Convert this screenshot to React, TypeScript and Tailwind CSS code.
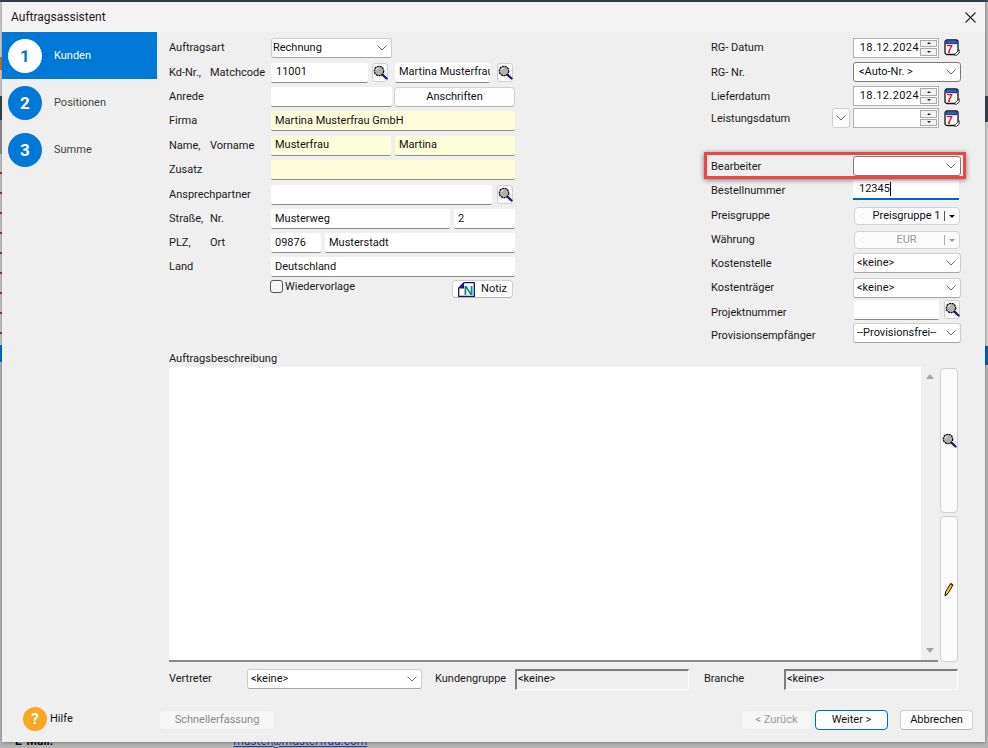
import React from "react";

const Chevron = ({ c = "#6b6b6b" }: { c?: string }) => (
  <svg width="10" height="6" viewBox="0 0 10 6" className="shrink-0">
    <path d="M0.5 0.5 L5 5 L9.5 0.5" fill="none" stroke={c} strokeWidth="1" />
  </svg>
);

const Lens = ({ size = 15 }: { size?: number }) => (
  <svg width={size} height={size} viewBox="0 0 14 14" className="shrink-0">
    <path d="M8.6 8.8 L12.6 12.6" stroke="#1a1a80" strokeWidth="2.2" strokeLinecap="round" />
    <circle cx="5.6" cy="5.6" r="4.4" fill="#b0b0b0" stroke="#111" strokeWidth="1.2" strokeDasharray="2 0.6" />
    <path d="M3.2 4.6 A3 3 0 0 1 5.2 2.8" fill="none" stroke="#e8e8e8" strokeWidth="1" />
  </svg>
);

const CalIcon = () => (
  <svg width="16" height="17" viewBox="0 0 16 17" className="shrink-0">
    <rect x="1" y="1" width="13" height="14.5" rx="2" fill="#fff" stroke="#111" strokeWidth="1.3" />
    <rect x="1.6" y="1.6" width="11.8" height="3.6" fill="#1d34c8" />
    <rect x="3" y="2.6" width="9" height="1" fill="#2fa56b" />
    <text x="2.6" y="14.4" fontSize="11.5" fontWeight="900" fontFamily="Liberation Sans, sans-serif" fill="#e01010">7</text>
    <path d="M10 15.8 L15.2 10.8 L15.2 14 L12.6 16.2 Z" fill="#fff" stroke="#111" strokeWidth="0.8" />
  </svg>
);

const NoteIcon = () => (
  <svg width="17" height="15" viewBox="0 0 17 15" className="shrink-0">
    <path d="M0.7 14.3 L0.7 6 L6 0.7 L16.3 0.7 L16.3 14.3 Z" fill="#fff" stroke="#14147a" strokeWidth="1.3" />
    <path d="M1 6.5 L6 1 L6 6.5 Z" fill="#14147a" />
    <text x="5.6" y="13" fontSize="13.5" fontWeight="900" fontFamily="Liberation Sans, sans-serif" fill="#0a8a85">N</text>
  </svg>
);

const Pen = () => (
  <svg width="10" height="15" viewBox="0 0 10 15" className="shrink-0">
    <path d="M1 14 L1.6 9.8 L6.6 1.6 L9 3 L4 11.4 Z" fill="#f2d80d" stroke="#111" strokeWidth="1" />
    <path d="M6.4 1.8 L8.9 3.2" stroke="#8a1010" strokeWidth="1.6" />
    <path d="M1 14 L1.6 11.6 L3 12.6 Z" fill="#111" />
  </svg>
);

const Input = ({ w, text = "", yellow = false, pl = "pl-[4px]" }: { w: string; text?: string; yellow?: boolean; pl?: string }) => (
  <div className={`${w} h-[20px] ${yellow ? "bg-[#fdfdd9]" : "bg-white"} border-b border-b-[#8c8c8c] rounded-[2px] ${pl} flex items-center overflow-hidden whitespace-nowrap text-[#111]`}>
    {text}
  </div>
);

const Select = ({ w, text = "", dark = false, pl = "pl-[3px]" }: { w: string; text?: string; dark?: boolean; pl?: string }) => (
  <div className={`${w} h-[20px] bg-white border ${dark ? "border-[#7a7a7a]" : "border-[#cdcdcd] border-b-[#a4a4a4]"} rounded-[3px] ${pl} pr-[4px] flex items-center justify-between whitespace-nowrap text-[#111]`}>
    <span>{text}</span>
    <Chevron />
  </div>
);

const IconBtn = ({ children }: { children: React.ReactNode }) => (
  <div className="w-[16px] h-[19px] bg-[#fbfbfb] border border-[#cfcfcf] rounded-[3px] flex items-center justify-center shrink-0">
    {children}
  </div>
);

const Btn = ({ w, text, extra = "", color = "text-[#111]" }: { w: string; text: React.ReactNode; extra?: string; color?: string }) => (
  <div className={`${w} h-[20px] bg-[#fdfdfd] border border-[#d0d0d0] border-b-[#b4b4b4] rounded-[4px] flex items-center justify-center shrink-0 whitespace-nowrap ${color} ${extra}`}>
    {text}
  </div>
);

const Spinner = () => (
  <div className="w-[17px] h-[16px] flex flex-col gap-[1px] shrink-0">
    <div className="h-[8px] bg-[#f2f2f2] border border-[#a8a8a8] flex items-center justify-center">
      <div className="w-0 h-0 border-x-[2px] border-x-transparent border-b-[2px] border-b-[#222]" />
    </div>
    <div className="h-[8px] bg-[#f2f2f2] border border-[#a8a8a8] flex items-center justify-center">
      <div className="w-0 h-0 border-x-[2px] border-x-transparent border-t-[2px] border-t-[#222]" />
    </div>
  </div>
);

const DateField = ({ text = "" }: { text?: string }) => (
  <div className="flex items-center gap-[5px]">
    <div className="w-[86px] h-[20px] bg-white border border-[#b0b0b0] flex items-center justify-end pr-[1px] gap-[1px]">
      <span className="text-[#111] whitespace-nowrap tracking-[0.4px]">{text}</span>
      <Spinner />
    </div>
    <CalIcon />
  </div>
);

const LeftRow = ({ h, label, children }: { h: string; label?: React.ReactNode; children: React.ReactNode }) => (
  <div className={`${h} flex items-center`}>
    <div className="w-[102px] shrink-0 text-[#1a1a1a] whitespace-nowrap">{label}</div>
    <div className="flex items-center">{children}</div>
  </div>
);

const Two = ({ a, b }: { a: string; b: string }) => (
  <>
    <span className="inline-block w-[41px]">{a}</span>
    {b}
  </>
);

const RightRow = ({ h, label, children, flat = false }: { h: string; label: string; children: React.ReactNode; flat?: boolean }) => (
  <div className={`${h} flex items-center`}>
    <div className={`w-[149px] shrink-0 pl-[7px] text-[#1a1a1a] whitespace-nowrap ${flat ? "" : "mt-[2px]"}`}>{label}</div>
    {children}
  </div>
);

const Step = ({ n, label, active = false }: { n: number; label: string; active?: boolean }) => (
  <div className={`h-[47px] flex items-center pl-[6px] ${active ? "bg-[#0078d7]" : ""}`}>
    <div className={`w-[34px] h-[34px] rounded-full flex items-center justify-center text-[17px] font-bold ${active ? "bg-white text-[#0078d7]" : "bg-[#0078d7] text-white"}`}>
      {n}
    </div>
    <span className={`ml-[12px] ${active ? "text-white" : "text-[#444]"}`}>{label}</span>
  </div>
);

const Pill = ({ text, disabled = false }: { text: string; disabled?: boolean }) => (
  <div className="w-[106px] h-[18px] ml-[1px] mt-[2px] bg-[#fbfbfb] border border-[#d2d2d2] rounded-[4px] flex items-center whitespace-nowrap">
    <span className={`flex-1 text-center pl-[14px] ${disabled ? "text-[#9a9a9a]" : "text-[#111]"}`}>{text}</span>
    <div className={`w-px h-[10px] ${disabled ? "bg-[#aaa]" : "bg-[#555]"}`} />
    <div className="w-[14px] flex justify-center">
      <div className={`w-0 h-0 border-x-[3px] border-x-transparent border-t-[3px] ${disabled ? "border-t-[#999]" : "border-t-[#111]"}`} />
    </div>
  </div>
);

const Sunken = ({ text }: { text: string }) => (
  <div className="w-[174px] h-[21px] border-t-2 border-l-2 border-[#7d7d7d] border-r border-b border-r-[#fff] border-b-[#fff] bg-[#efefef] pl-[1px] flex items-start leading-[15px] text-[#111]">
    {text}
  </div>
);

export default function App() {
  return (
    <div className="w-[988px] h-[748px] flex flex-col overflow-hidden bg-[#b4b4b4] text-[11px] leading-[16px]" style={{ fontFamily: 'Roboto, "Open Sans", sans-serif' }}>
      <div className="h-[2px] bg-[#3b4654] shrink-0" />
      <div className="flex h-[740px] shrink-0">
        <div className="w-[2px] flex flex-col shrink-0">
          <div className="h-[55px] bg-[#d8d8d8]" />
          <div className="h-[13px] bg-[#c08040]" />
          <div className="h-[26px] bg-[#d8d8d8]" />
          <div className="h-[24px] bg-[#3b4654]" />
          <div className="h-[34px] bg-[#9a9a9a]" />
          <div className="h-[191px] bg-[repeating-linear-gradient(to_bottom,#d0d0d0_0px,#d0d0d0_18px,#b03030_18px,#b03030_20px)]" />
          <div className="h-[17px] bg-[#0078d7]" />
          <div className="flex-1 bg-[#bdbdbd]" />
        </div>
        <div className="w-[983px] h-[740px] flex flex-col bg-[#efefef] shadow-[0_0_4px_rgba(0,0,0,0.45)] relative">
          <div className="h-[30px] shrink-0 bg-[#f3f3f3] flex items-center justify-between pl-[9px] pr-[9px]">
            <span className="text-[#1a1a1a] text-[12px]">Auftragsassistent</span>
            <svg width="11" height="11" viewBox="0 0 11 11"><path d="M0.5 0.5 L10.5 10.5 M10.5 0.5 L0.5 10.5" stroke="#222" strokeWidth="1.1" /></svg>
          </div>
          <div className="flex flex-1 min-h-0">
            <div className="w-[155px] shrink-0 flex flex-col">
              <Step n={1} label="Kunden" active />
              <Step n={2} label="Positionen" />
              <Step n={3} label="Summe" />
              <div className="mt-auto mb-[11px] ml-[21px] flex items-center gap-[3px]">
                <div className="w-[24px] h-[24px] rounded-full bg-[#f7a823] text-white font-bold text-[15px] flex items-center justify-center">?</div>
                <span className="text-[#111]">Hilfe</span>
              </div>
            </div>
            <div className="flex-1 min-w-0 flex flex-col pl-[12px]">
              <div className="flex h-[318px] shrink-0 pt-[3px]">
                <div className="w-[346px] shrink-0 flex flex-col mt-[1px]">
                  <LeftRow h="h-[24px]" label="Auftragsart"><Select w="w-[121px]" text="Rechnung" pl="pl-[1px]" /></LeftRow>
                  <LeftRow h="h-[25px]" label={<Two a="Kd-Nr.," b="Matchcode" />}>
                    <Input w="w-[97px]" text="11001" pl="pl-[5px]" />
                    <div className="ml-[4px]"><IconBtn><Lens /></IconBtn></div>
                    <div className="ml-[7px]"><Input w="w-[95px]" text="Martina Musterfrau" /></div>
                    <div className="ml-[7px]"><IconBtn><Lens /></IconBtn></div>
                  </LeftRow>
                  <LeftRow h="h-[24px]" label="Anrede">
                    <Input w="w-[121px]" />
                    <div className="ml-[2px]"><Btn w="w-[121px]" text="Anschriften" /></div>
                  </LeftRow>
                  <LeftRow h="h-[24px]" label="Firma"><Input w="w-[244px]" text="Martina Musterfrau GmbH" yellow /></LeftRow>
                  <LeftRow h="h-[25px]" label={<Two a="Name," b="Vorname" />}>
                    <Input w="w-[120px]" text="Musterfrau" yellow />
                    <div className="ml-[4px]"><Input w="w-[120px]" text="Martina" yellow /></div>
                  </LeftRow>
                  <LeftRow h="h-[24px]" label="Zusatz"><Input w="w-[244px]" yellow /></LeftRow>
                  <LeftRow h="h-[25px]" label="Ansprechpartner">
                    <Input w="w-[221px]" />
                    <div className="ml-[5px]"><IconBtn><Lens /></IconBtn></div>
                  </LeftRow>
                  <LeftRow h="h-[24px]" label={<Two a="Straße," b="Nr." />}>
                    <Input w="w-[179px]" text="Musterweg" />
                    <div className="ml-[4px]"><Input w="w-[61px]" text="2" /></div>
                  </LeftRow>
                  <LeftRow h="h-[24px]" label={<Two a="PLZ," b="Ort" />}>
                    <Input w="w-[50px]" text="09876" />
                    <div className="ml-[4px]"><Input w="w-[190px]" text="Musterstadt" /></div>
                  </LeftRow>
                  <LeftRow h="h-[24px]" label="Land"><Input w="w-[244px]" text="Deutschland" /></LeftRow>
                  <div className="h-[22px] flex items-start pl-[101px]">
                    <div className="w-[13px] h-[13px] mt-[1px] border border-[#555] rounded-[3px] bg-[#f5f5f5] shrink-0" />
                    <span className="ml-[2px] text-[#1a1a1a]">Wiedervorlage</span>
                    <div className="ml-auto mr-[2px] mt-[1px]">
                      <Btn w="w-[61px]" extra="!h-[18px] gap-[6px]" text={<><NoteIcon /><span>Notiz</span></>} />
                    </div>
                  </div>
                </div>
                <div className="ml-[189px] w-[262px] flex flex-col">
                  <RightRow h="h-[25px]" label="RG- Datum" flat><DateField text="18.12.2024" /></RightRow>
                  <RightRow h="h-[24px]" label="RG- Nr."><Select w="w-[108px]" text="<Auto-Nr. >" dark pl="pl-[5px]" /></RightRow>
                  <RightRow h="h-[24px]" label="Lieferdatum"><DateField text="18.12.2024" /></RightRow>
                  <div className="h-[20px] mb-[26px] flex items-center relative">
                    <div className="w-[149px] shrink-0 pl-[7px] mt-[2px] text-[#1a1a1a] whitespace-nowrap">Leistungsdatum</div>
                    <div className="absolute left-[128px] top-0 w-[18px] h-[20px] bg-[#fbfbfb] border border-[#cfcfcf] rounded-[3px] flex items-center justify-center"><Chevron /></div>
                    <DateField />
                  </div>
                  <div className="h-[24px] flex items-center relative">
                    <div className="w-[149px] shrink-0 pl-[7px] mt-[2px] text-[#1a1a1a]">Bearbeiter</div>
                    <Select w="w-[108px]" dark />
                    <div className="absolute left-0 top-[-2px] w-[262px] h-[27px] border-[3px] border-[#ee4646] shadow-[0_1px_5px_rgba(0,0,0,0.5)]" />
                  </div>
                  <RightRow h="h-[25px]" label="Bestellnummer" flat>
                    <div className="w-[106px] h-[20px] -mt-[2px] bg-white border-b-2 border-b-[#0067c0] pl-[6px] flex items-center text-[#111]">
                      12345<span className="w-px h-[14px] bg-[#111]" />
                    </div>
                  </RightRow>
                  <RightRow h="h-[24px]" label="Preisgruppe"><Pill text="Preisgruppe 1" /></RightRow>
                  <RightRow h="h-[24px]" label="Währung"><Pill text="EUR" disabled /></RightRow>
                  <RightRow h="h-[24px]" label="Kostenstelle"><Select w="w-[108px]" text="<keine>" /></RightRow>
                  <RightRow h="h-[25px]" label="Kostenträger" flat><Select w="w-[108px]" text="<keine>" /></RightRow>
                  <RightRow h="h-[23px]" label="Projektnummer">
                    <div className="ml-[1px] -mt-[4px]"><Input w="w-[85px]" /></div>
                    <div className="ml-[5px] -mt-[4px]"><IconBtn><Lens /></IconBtn></div>
                  </RightRow>
                  <RightRow h="h-[24px]" label="Provisionsempfänger">
                    <div className="-mt-[4px]"><Select w="w-[108px]" text="--Provisionsfrei--" /></div>
                  </RightRow>
                </div>
              </div>
              <div className="h-[17px] shrink-0 flex items-center text-[#1a1a1a]">Auftragsbeschreibung</div>
              <div className="flex h-[295px] shrink-0">
                <div className="w-[769px] bg-white border-b-2 border-b-[#8a8a8a] flex justify-end shrink-0">
                  <div className="w-[17px] bg-[#f0f0f0] flex flex-col items-center justify-between py-[7px]">
                    <div className="w-0 h-0 border-x-[4px] border-x-transparent border-b-[5px] border-b-[#a6a6a6]" />
                    <div className="w-0 h-0 border-x-[4px] border-x-transparent border-t-[5px] border-t-[#a6a6a6]" />
                  </div>
                </div>
                <div className="ml-[2px] w-[18px] flex flex-col gap-[3px] pt-px">
                  <div className="h-[145px] bg-[#fbfbfb] border border-[#d0d0d0] rounded-[4px] flex items-center justify-center"><Lens /></div>
                  <div className="h-[146px] bg-[#fbfbfb] border border-[#d0d0d0] rounded-[4px] flex items-center justify-center"><Pen /></div>
                </div>
              </div>
              <div className="h-[22px] mt-[6px] shrink-0 flex items-center text-[#1a1a1a]">
                <div className="w-[78px]">Vertreter</div>
                <Select w="w-[175px]" text="<keine>" />
                <div className="w-[79px] ml-[13px] whitespace-nowrap">Kundengruppe</div>
                <div className="ml-[1px]"><Sunken text="<keine>" /></div>
                <div className="w-[80px] ml-[15px]">Branche</div>
                <Sunken text="<keine>" />
              </div>
              <div className="mt-[20px] flex items-start -ml-[10px] pr-[12px]">
                <Btn w="w-[116px]" text="Schnellerfassung" color="text-[#8a8a8a]" extra="!bg-[#f6f6f6] !border-[#ececec]" />
                <div className="ml-auto flex">
                  <Btn w="w-[71px]" text="< Zurück" color="text-[#9a9a9a]" extra="!bg-[#f6f6f6] !border-[#ececec]" />
                  <div className="ml-[3px]"><Btn w="w-[73px]" text="Weiter >" extra="!border-[#0067c0] !border-b-[#0067c0]" /></div>
                  <div className="ml-[12px]"><Btn w="w-[73px]" text="Abbrechen" /></div>
                </div>
              </div>
            </div>
          </div>
        </div>
        <div className="w-[3px] flex flex-col shrink-0">
          <div className="h-[94px] bg-[#bdbdbd]" />
          <div className="h-[26px] bg-[#3b4654]" />
          <div className="h-[224px] bg-[#d6d6d6]" />
          <div className="h-[19px] bg-[#0068c0]" />
          <div className="flex-1 bg-[#bcbcbc]" />
        </div>
      </div>
      <div className="h-[6px] shrink-0 overflow-hidden bg-[#b4b4b4] flex text-[12px]">
        <span className="ml-[15px] -mt-[9px] font-bold text-[#111]">E-Mail:</span>
        <span className="ml-[180px] -mt-[9px] text-[#1a3fa0] underline">muster@musterfrau.com</span>
      </div>
    </div>
  );
}
